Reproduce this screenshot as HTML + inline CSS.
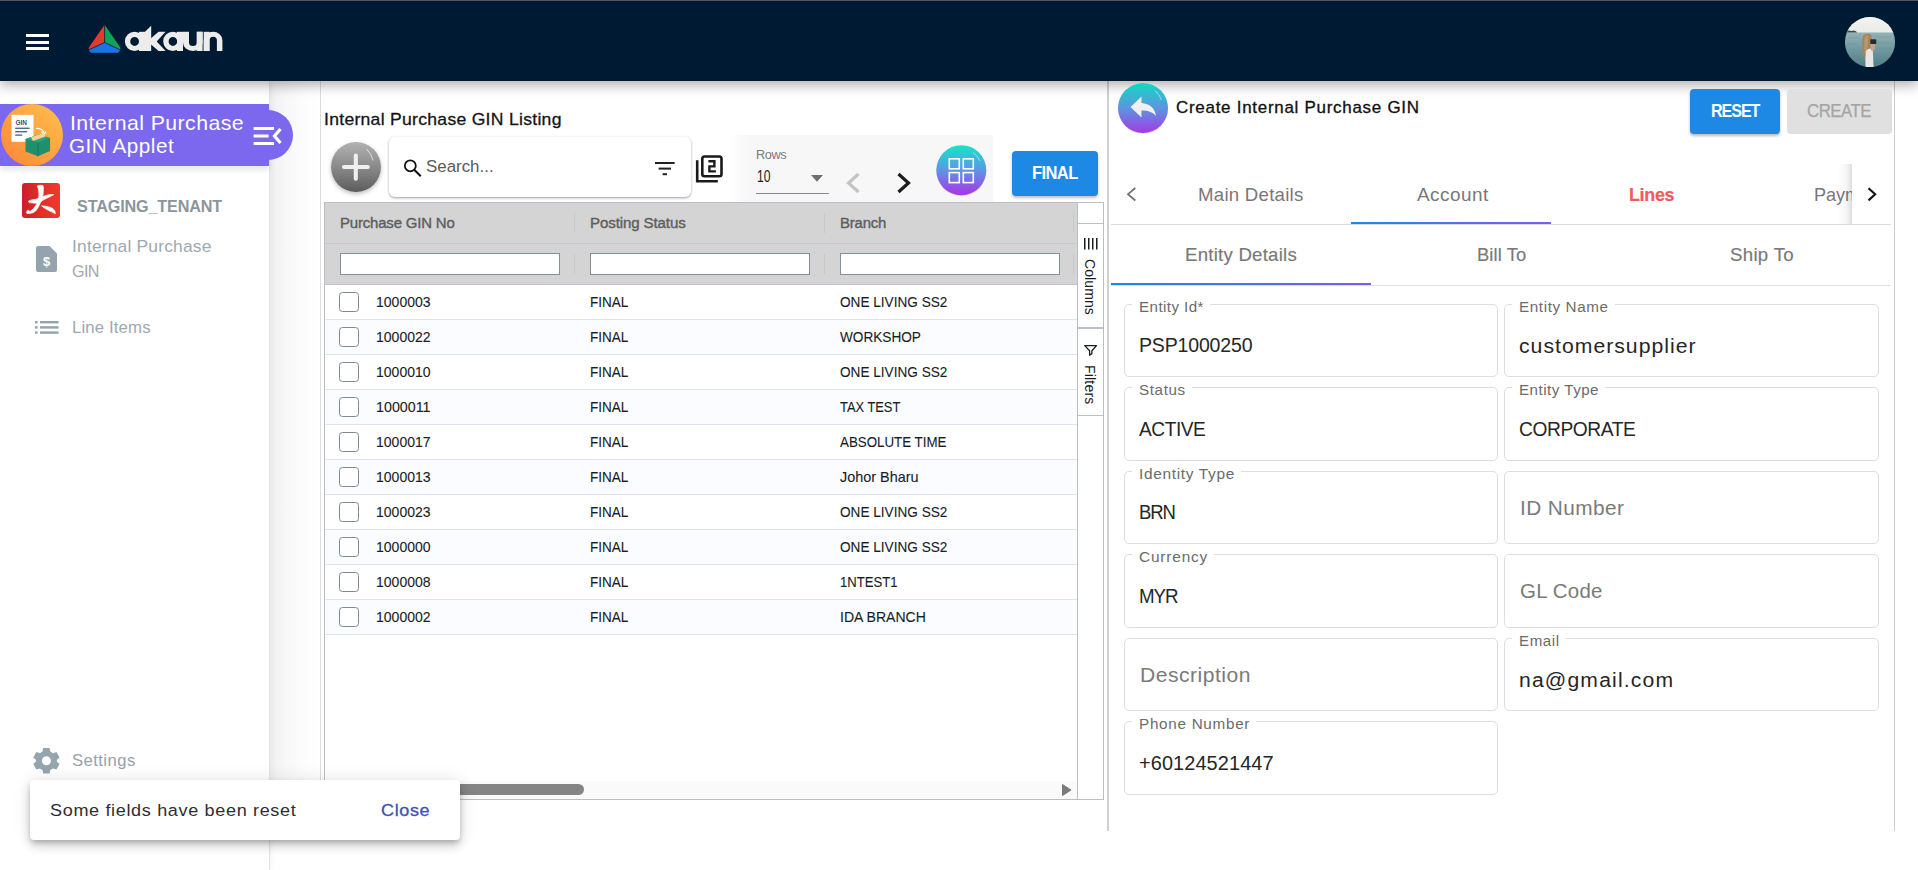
<!DOCTYPE html><html><head><meta charset="utf-8"><style>
*{box-sizing:border-box;margin:0;padding:0}
html,body{width:1918px;height:870px;overflow:hidden;background:#fff;font-family:"Liberation Sans",sans-serif}
.a{position:absolute}
.t{position:absolute;white-space:nowrap;line-height:1}
svg{position:absolute;overflow:visible}
</style></head><body>
<div class="a" style="left:270px;top:81px;width:1648px;height:789px;background:#fff"></div>
<div class="a" style="left:270px;top:81px;width:51px;height:720px;background:linear-gradient(90deg,#f1f1f1,#f8f8f8 35%,#fdfdfd 70%,#fff)"></div>
<div class="a" style="left:270px;top:801px;width:1648px;height:69px;background:#fff"></div>
<div class="a" style="left:1896px;top:81px;width:22px;height:789px;background:#fff"></div>
<div class="a" style="left:1107px;top:81px;width:789px;height:789px;background:#fff"></div>
<div class="a" style="left:0;top:81px;width:270px;height:789px;background:#fff;border-right:1px solid #e3e3e3;box-shadow:2px 0 6px rgba(0,0,0,.04)"></div>
<div class="a" style="left:320px;top:81px;width:787px;height:720px;background:#fff;border-left:1px solid #dcdcdc"></div>
<div class="a" style="left:1107px;top:81px;width:2px;height:750px;background:#d0d0d0"></div>
<div class="a" style="left:1894px;top:81px;width:1.2px;height:750px;background:#cdcdcd"></div>
<div class="a" style="left:0;top:0;width:1918px;height:81px;background:#011a33;border-top:1px solid #51565c;box-shadow:0 4px 12px rgba(0,0,0,.32);z-index:3"></div>
<div class="a" style="left:0;top:0;width:1918px;height:81px;z-index:4"><div class="a" style="left:25.7px;top:34px;width:23.5px;height:3px;background:#fff"></div><div class="a" style="left:25.7px;top:40.5px;width:23.5px;height:3px;background:#fff"></div><div class="a" style="left:25.7px;top:47px;width:23.5px;height:3px;background:#fff"></div><svg style="left:0;top:0" width="300" height="80" viewBox="0 0 300 80">
<path d="M104.6 24.8 L104.6 42.5 L89 49.6 Q88 48.8 89.2 47 Z" fill="#e03c2c"/>
<path d="M104.6 24.8 L120 47 Q121 48.8 120 49.6 L104.6 42.5 Z" fill="#0ea25a"/>
<path d="M104.6 42.5 L120 49.6 Q120 52.7 117 52.7 L92 52.7 Q89 52.7 89 49.6 Z" fill="#1a73e8"/>
<path d="M104.6 24 V42.5 L88.5 50 M104.6 42.5 L120.5 50" stroke="#0a1a2e" stroke-width="0.7" fill="none"/>
</svg><svg style="left:0;top:0" width="300" height="80" viewBox="0 0 300 80"><g fill="#ececec" fill-rule="evenodd">
<path d="M144.1 41.4 A9.6 9.6 0 1 1 124.9 41.4 A9.6 9.6 0 1 1 144.1 41.4 Z M139 41.4 A4.4 4.5 0 1 0 130.2 41.4 A4.4 4.5 0 1 0 139 41.4 Z"/>
<rect x="139" y="31.8" width="6.3" height="19.2"/>
<path d="M145 31.8 L151.2 25.7 L151.2 51 L145 51 Z"/>
<path d="M151 38.3 L158.6 31.8 L165.6 31.8 L156.7 41.4 L165.6 51 L158.6 51 L151 44.6 Z"/>
<path d="M182.4 41.4 A9.6 9.6 0 1 1 163.2 41.4 A9.6 9.6 0 1 1 182.4 41.4 Z M177.2 41.4 A4.3 4.5 0 1 0 168.6 41.4 A4.3 4.5 0 1 0 177.2 41.4 Z"/>
<rect x="177" y="31.8" width="6" height="19.2"/>
<path d="M183 31.8 V42.5 A9.8 8.5 0 0 0 202.6 42.5 V31.8 H196.8 V42.5 A3.9 3.6 0 0 1 189 42.5 V31.8 Z"/>
<rect x="196.8" y="31.8" width="5.8" height="19.2"/>
<path d="M203.7 51 V40.3 A9.35 8.5 0 0 1 222.4 40.3 V51 H216.9 V40.3 A3.7 3.6 0 0 0 209.5 40.3 V51 Z"/>
<rect x="203.7" y="31.8" width="5.8" height="19.2"/>
</g></svg><svg style="left:1845px;top:16.75px" width="50" height="50" viewBox="0 0 50 50">
<defs><clipPath id="av"><circle cx="25" cy="25.1" r="25.1"/></clipPath>
<linearGradient id="sea" x1="0" y1="0" x2="0" y2="1"><stop offset="0" stop-color="#b4cacc"/><stop offset="0.45" stop-color="#86a8ad"/><stop offset="1" stop-color="#4f7f88"/></linearGradient>
<linearGradient id="sky" x1="0" y1="0" x2="0" y2="1"><stop offset="0" stop-color="#f4f3ef"/><stop offset="1" stop-color="#e8ebe7"/></linearGradient></defs>
<g clip-path="url(#av)">
<rect width="50" height="50" fill="url(#sea)"/>
<rect width="50" height="15.5" fill="url(#sky)"/>
<path d="M0 15.6 L1.5 14 Q4 13.2 6.5 14 Q8.5 13 11 14.2 L12.2 15.6 Z" fill="#3d4d46"/>
<g stroke="#5f8d95" stroke-width="0.7" opacity="0.55"><path d="M3 21 H14 M30 20 H46 M2 27 H12 M32 26 H48 M4 33 H15 M31 32 H47 M6 39 H16 M30 38 H45 M9 45 H17 M30 44 H42"/></g>
<path d="M17.8 19 Q20 16.2 24.5 16.8 Q27 18 26.5 21.5 L25.8 29 Q24.8 33 24 38 L21 43 Q18 41 17.6 35 Q16.5 27 17.8 19 Z" fill="#a4845c"/>
<path d="M19.5 20 Q21 17.8 23.5 18.5 L22.5 30 Q21 35 20 38 Q18.8 30 19.5 20 Z" fill="#c2a073" opacity="0.7"/>
<path d="M21 34 Q22.5 31.2 25.5 31.5 L27.8 34 L28.6 50 L20.5 50 Q20 42 21 34 Z" fill="#e9e6e4"/>
<path d="M25.2 27.2 L30.2 27.2 L29.6 33 L26 33.6 Z" fill="#c7a286"/>
<rect x="25.3" y="22.3" width="6" height="4.8" rx="0.8" fill="#262d2e"/>
</g></svg></div>
<div class="a" style="left:0;top:0;width:300px;height:870px;z-index:2"><div class="a" style="left:0;top:104px;width:269px;height:62px;background:#7b68ee;box-shadow:0 4px 6px rgba(0,0,0,.10)"></div><div class="a" style="left:243px;top:110px;width:50px;height:50px;border-radius:25px;background:#7b68ee"></div><svg style="left:1px;top:104px" width="62" height="62" viewBox="0 0 62 62">
<defs><linearGradient id="og" x1="0.1" y1="0.9" x2="0.9" y2="0.1"><stop offset="0" stop-color="#fd8a3a"/><stop offset="1" stop-color="#ffbb4a"/></linearGradient></defs>
<circle cx="31" cy="31" r="31" fill="url(#og)"/>
<rect x="10.5" y="10.8" width="22" height="27" fill="#fff"/>
<text x="14.5" y="20.5" font-family="Liberation Sans" font-weight="bold" font-size="6.5" fill="#1e5a72">GIN</text>
<rect x="14.2" y="23.6" width="14.5" height="1.4" fill="#4a6f80"/>
<rect x="14.2" y="27" width="12" height="1.4" fill="#4a6f80"/>
<rect x="14.2" y="30.4" width="7" height="1.4" fill="#4a6f80"/>
<path d="M35 24.5 Q41 24 43 29" stroke="#fff" stroke-width="1.2" fill="none"/>
<path d="M40.5 28 L43 30.5 L45 27.5" stroke="#fff" stroke-width="1.2" fill="none"/>
<path d="M24.5 35 L38 30.5 L49 34 L49 47 L37 52.3 L24.5 47.5 Z" fill="#1f8f6e"/>
<path d="M24.5 35 L38 30.5 L49 34 L37 38.5 Z" fill="#2aa37d"/>
<path d="M37 38.5 L37 52.3" stroke="#177559" stroke-width="0.8"/>
<path d="M30 33.2 L42.5 29 L44.5 32.6 L32 37 Z" fill="#f4d49a"/>
</svg><div class="t" style="left:69.60px;top:113.08px;font-size:20.49px;letter-spacing:0.407px;transform-origin:0 0;transform:scaleX(1.0390);color:#fff;">Internal Purchase</div><div class="t" style="left:69.20px;top:136.70px;font-size:19.77px;letter-spacing:0.506px;transform-origin:0 0;transform:scaleX(1.0455);color:#fff;">GIN Applet</div><svg style="left:0;top:0" width="300" height="200">
<rect x="253.6" y="127" width="20.4" height="3" fill="#fff"/>
<rect x="253.6" y="134.5" width="15" height="3" fill="#fff"/>
<rect x="253.6" y="142" width="20.4" height="3" fill="#fff"/>
<path d="M280.5 129 L274.5 136 L280.5 143" stroke="#fff" stroke-width="3.2" fill="none"/>
</svg><svg style="left:22px;top:183px" width="38" height="35" viewBox="0 0 38 35">
<defs><linearGradient id="rg" x1="0" y1="0" x2="1" y2="0"><stop offset="0" stop-color="#c8202a"/><stop offset="0.4" stop-color="#e02a26"/><stop offset="1" stop-color="#ef3b2d"/></linearGradient></defs>
<rect width="38" height="35" rx="3" fill="url(#rg)"/>
<path d="M15.4 2.9 Q18 1.8 21 2.5 Q21.8 6 21.2 10 Q20.8 14 19.8 17 L17.8 21 Q16.2 25 13.7 28 Q11 30.8 5 30.5 Q3.9 29.6 4.8 28.4 Q5.6 26.6 6.5 27.4 Q7.3 28.4 8.7 28.1 Q12 26 14.4 21.5 L16.4 17 Q17.2 12 16.8 8.5 Q16.3 5 15.4 2.9 Z" fill="#fff" stroke="#fff" stroke-width="0.7"/>
<path d="M6.6 18 Q10 16.4 14 16.3 Q18 14.3 24 12.4 Q28 11.2 31.8 11.6 Q28.5 13.6 24 15.6 Q19.5 17.6 17.2 20 Q12 20.4 7.3 19.6 Q6.2 19 6.6 18 Z" fill="#fff" stroke="#fff" stroke-width="0.7"/>
<path d="M19.5 22.8 Q26 23 30.5 25.3 Q33.6 27.4 33.3 30.7 Q30 29 26 27.1 Q22 25.2 19.5 22.8 Z" fill="#fff" stroke="#fff" stroke-width="0.7"/>
</svg><div class="t" style="left:76.70px;top:198.04px;font-size:16.42px;letter-spacing:-0.155px;transform-origin:0 0;transform:scaleX(0.9864);color:#8a959d;font-weight:bold;">STAGING_TENANT</div><svg style="left:35.9px;top:246.2px" width="21" height="26" viewBox="0 0 21 26">
<path d="M2 0 H13.5 L21 7.5 V24 Q21 26 19 26 H2 Q0 26 0 24 V2 Q0 0 2 0 Z" fill="#94a3ad"/>
<text x="10.5" y="19.5" text-anchor="middle" font-family="Liberation Sans" font-weight="bold" font-size="13" fill="#fff">$</text>
</svg><div class="t" style="left:71.70px;top:238.35px;font-size:17.01px;letter-spacing:0.190px;transform-origin:0 0;transform:scaleX(1.0223);color:#9ea8b0;">Internal Purchase</div><div class="t" style="left:71.70px;top:263.15px;font-size:17.01px;letter-spacing:-0.715px;transform-origin:0 0;transform:scaleX(0.9502);color:#9ea8b0;">GIN</div><svg style="left:34.5px;top:320.7px" width="24" height="13" viewBox="0 0 24 13">
<g fill="#94a3ad"><rect x="0" y="0" width="2.6" height="2.4"/><rect x="0" y="5.2" width="2.6" height="2.4"/><rect x="0" y="10.4" width="2.6" height="2.4"/>
<rect x="5" y="0" width="18.5" height="2.4"/><rect x="5" y="5.2" width="18.5" height="2.4"/><rect x="5" y="10.4" width="18.5" height="2.4"/></g></svg><div class="t" style="left:71.70px;top:319.52px;font-size:16.57px;letter-spacing:0.121px;transform-origin:0 0;transform:scaleX(1.0141);color:#9ea8b0;">Line Items</div><svg style="left:0;top:0" width="80" height="800"><g transform="translate(46.4 760.8)">
<path fill="#94a5af" fill-rule="evenodd" d="M-3.2 -12.7 H3.2 L3.9 -9.2 L6.6 -7.6 L10 -8.8 L13.2 -3.3 L10.5 -1 V1 L13.2 3.3 L10 8.8 L6.6 7.6 L3.9 9.2 L3.2 12.7 H-3.2 L-3.9 9.2 L-6.6 7.6 L-10 8.8 L-13.2 3.3 L-10.5 1 V-1 L-13.2 -3.3 L-10 -8.8 L-6.6 -7.6 L-3.9 -9.2 Z M4.5 0 A4.5 4.5 0 1 0 -4.5 0 A4.5 4.5 0 1 0 4.5 0 Z"/></g></svg><div class="t" style="left:71.90px;top:752.78px;font-size:15.84px;letter-spacing:0.429px;transform-origin:0 0;transform:scaleX(1.0499);color:#96a2aa;">Settings</div></div>
<div class="a" style="left:0;top:0;width:1110px;height:870px;z-index:1"><div class="t" style="left:324.10px;top:111.15px;font-size:17.01px;letter-spacing:0.274px;transform-origin:0 0;transform:scaleX(1.0334);color:#141414;-webkit-text-stroke:0.3px #141414;">Internal Purchase GIN Listing</div><div class="a" style="left:331px;top:142px;width:49.6px;height:50px;border-radius:50%;background:linear-gradient(180deg,#b2b2b2,#8a8a8a 50%,#5c5c5c);box-shadow:0 2px 4px rgba(0,0,0,.25)"></div><svg style="left:331px;top:142px" width="50" height="50" viewBox="0 0 50 50">
<path d="M35.5 7 A21.5 21.5 0 0 1 42 18.5" stroke="rgba(255,255,255,.65)" stroke-width="1" fill="none"/>
<path d="M24.8 13.5 V36.8 M13 25 H36.8" stroke="#efefef" stroke-width="4.1" stroke-linecap="round"/>
</svg><div class="a" style="left:389px;top:137px;width:302px;height:60px;background:#fff;border-radius:6px;box-shadow:0 1px 3px rgba(0,0,0,.3),0 1px 1px rgba(0,0,0,.1)"></div><svg style="left:0;top:0" width="700" height="200"><circle cx="410.3" cy="165.8" r="5.5" stroke="#111" stroke-width="1.8" fill="none"/><path d="M414.2 169.8 L420.8 176.3" stroke="#111" stroke-width="2.1"/></svg><div class="t" style="left:426.40px;top:159.47px;font-size:16.86px;letter-spacing:0.008px;transform-origin:0 0;transform:scaleX(1.0009);color:#5a5a5a;">Search...</div><svg style="left:654.9px;top:161.7px" width="20" height="14" viewBox="0 0 20 14">
<rect x="0" y="0" width="19.6" height="2" fill="#222"/><rect x="3.6" y="5.6" width="12.4" height="2" fill="#222"/><rect x="7.6" y="11.2" width="4.4" height="2" fill="#222"/></svg><div class="a" style="left:730px;top:135px;width:263px;height:67px;background:linear-gradient(90deg,rgba(247,247,247,0),#f7f7f7 18px)"></div><svg style="left:0;top:0" width="760" height="200" viewBox="0 0 760 200">
<path d="M697.2 160.2 V181.3 H717.8" stroke="#1a1a1a" stroke-width="2.6" fill="none"/>
<rect x="702.3" y="156.5" width="19.2" height="19.7" rx="2.2" stroke="#1a1a1a" stroke-width="2.6" fill="none"/>
<path d="M708.4 161.3 H714.4 V166.4 H709.4 V171.4 H715.9" stroke="#1a1a1a" stroke-width="2.4" fill="none"/>
</svg><div class="t" style="left:756.30px;top:148.06px;font-size:13.23px;letter-spacing:-0.389px;transform-origin:0 0;transform:scaleX(0.9634);color:#7a7a7a;">Rows</div><div class="t" style="left:756.50px;top:167.84px;font-size:16.30px;transform-origin:0 0;transform:scaleX(0.7448);color:#222;">10</div><svg style="left:811px;top:174.5px" width="12" height="7"><path d="M0 0 H12 L6 6.8 Z" fill="#6f6f6f"/></svg><div class="a" style="left:756px;top:193px;width:73px;height:1px;background:#8a8a8a"></div><svg style="left:845px;top:172px" width="16" height="22"><path d="M13.5 2 L3.5 11 L13.5 20" stroke="#c4c4c4" stroke-width="3.2" fill="none"/></svg><svg style="left:896px;top:172px" width="16" height="22"><path d="M2.5 2 L12.5 11 L2.5 20" stroke="#1c1c1c" stroke-width="3.2" fill="none"/></svg><svg style="left:936px;top:144.6px" width="51" height="51" viewBox="0 0 51 51">
<defs><linearGradient id="gg" x1="0" y1="0" x2="0" y2="1"><stop offset="0" stop-color="#14e6c4"/><stop offset="0.5" stop-color="#5f95e6"/><stop offset="1" stop-color="#aa33e6"/></linearGradient></defs>
<circle cx="25.3" cy="26" r="25" fill="rgba(0,0,0,.12)"/>
<circle cx="25.3" cy="25.2" r="25" fill="url(#gg)"/>
<path d="M37 7.5 A21 21 0 0 1 44 16" stroke="rgba(255,255,255,.6)" stroke-width="0.8" fill="none"/>
<g stroke="#fff" stroke-width="1.6" fill="none">
<rect x="13.3" y="13.8" width="10" height="10"/><rect x="27.3" y="13.8" width="10" height="10"/>
<rect x="13.3" y="27.6" width="10" height="10"/><rect x="27.3" y="27.6" width="10" height="10"/></g>
</svg><div class="a" style="left:1012px;top:151px;width:86px;height:45px;background:#1e88e5;border-radius:4px;box-shadow:0 2px 3px rgba(0,0,0,.25)"></div><div class="t" style="left:1031.80px;top:164.97px;font-size:17.44px;letter-spacing:-0.638px;transform-origin:0 0;transform:scaleX(0.9475);color:#fff;font-weight:bold;">FINAL</div><div class="a" style="left:324px;top:202px;width:780px;height:598px;border:1px solid #babfc7;background:#fff"></div><div class="a" style="left:325px;top:203px;width:752px;height:82px;background:#d4d4d4;border-bottom:1px solid #c0c6cc"></div><div class="a" style="left:325px;top:243px;width:752px;height:1px;background:#c3c9cf"></div><div class="a" style="left:574px;top:213px;width:1px;height:20px;background:#c5c8cc"></div><div class="a" style="left:574px;top:254px;width:1px;height:20px;background:#c5c8cc"></div><div class="a" style="left:824px;top:213px;width:1px;height:20px;background:#c5c8cc"></div><div class="a" style="left:824px;top:254px;width:1px;height:20px;background:#c5c8cc"></div><div class="a" style="left:1073px;top:213px;width:1px;height:20px;background:#c5c8cc"></div><div class="a" style="left:1073px;top:254px;width:1px;height:20px;background:#c5c8cc"></div><div class="t" style="left:340.00px;top:215.13px;font-size:15.26px;letter-spacing:-0.169px;transform-origin:0 0;transform:scaleX(0.9798);color:#5e5e5e;-webkit-text-stroke:0.4px #5e5e5e;">Purchase GIN No</div><div class="t" style="left:590.00px;top:215.13px;font-size:15.26px;letter-spacing:-0.100px;transform-origin:0 0;transform:scaleX(0.9867);color:#5e5e5e;-webkit-text-stroke:0.4px #5e5e5e;">Posting Status</div><div class="t" style="left:840.00px;top:215.13px;font-size:15.26px;letter-spacing:-0.193px;transform-origin:0 0;transform:scaleX(0.9796);color:#5e5e5e;-webkit-text-stroke:0.4px #5e5e5e;">Branch</div><div class="a" style="left:340px;top:253px;width:220px;height:22px;background:#fff;border:1px solid #7f9396"></div><div class="a" style="left:590px;top:253px;width:220px;height:22px;background:#fff;border:1px solid #7f9396"></div><div class="a" style="left:840px;top:253px;width:220px;height:22px;background:#fff;border:1px solid #7f9396"></div><div class="a" style="left:325px;top:285px;width:752px;height:35px;background:#fff;border-bottom:1px solid #dde2eb"></div><div class="a" style="left:339.4px;top:292.2px;width:20px;height:19.5px;border:1.6px solid #7d8b90;border-radius:3.5px;background:#fff"></div><div class="t" style="left:375.60px;top:294.49px;font-size:15.07px;transform-origin:0 0;transform:scaleX(0.9306);color:#181d1f;-webkit-text-stroke:0.1px #181d1f;">1000003</div><div class="t" style="left:589.70px;top:294.45px;font-size:15.12px;transform-origin:0 0;transform:scaleX(0.8940);color:#181d1f;-webkit-text-stroke:0.1px #181d1f;">FINAL</div><div class="t" style="left:839.50px;top:294.45px;font-size:15.12px;transform-origin:0 0;transform:scaleX(0.9003);color:#181d1f;-webkit-text-stroke:0.1px #181d1f;">ONE LIVING SS2</div><div class="a" style="left:325px;top:320px;width:752px;height:35px;background:#fafcff;border-bottom:1px solid #dde2eb"></div><div class="a" style="left:339.4px;top:327.2px;width:20px;height:19.5px;border:1.6px solid #7d8b90;border-radius:3.5px;background:#fff"></div><div class="t" style="left:375.60px;top:329.49px;font-size:15.07px;transform-origin:0 0;transform:scaleX(0.9306);color:#181d1f;-webkit-text-stroke:0.1px #181d1f;">1000022</div><div class="t" style="left:589.70px;top:329.45px;font-size:15.12px;transform-origin:0 0;transform:scaleX(0.8940);color:#181d1f;-webkit-text-stroke:0.1px #181d1f;">FINAL</div><div class="t" style="left:839.50px;top:329.45px;font-size:15.12px;transform-origin:0 0;transform:scaleX(0.9013);color:#181d1f;-webkit-text-stroke:0.1px #181d1f;">WORKSHOP</div><div class="a" style="left:325px;top:355px;width:752px;height:35px;background:#fff;border-bottom:1px solid #dde2eb"></div><div class="a" style="left:339.4px;top:362.2px;width:20px;height:19.5px;border:1.6px solid #7d8b90;border-radius:3.5px;background:#fff"></div><div class="t" style="left:375.60px;top:364.49px;font-size:15.07px;transform-origin:0 0;transform:scaleX(0.9306);color:#181d1f;-webkit-text-stroke:0.1px #181d1f;">1000010</div><div class="t" style="left:589.70px;top:364.45px;font-size:15.12px;transform-origin:0 0;transform:scaleX(0.8940);color:#181d1f;-webkit-text-stroke:0.1px #181d1f;">FINAL</div><div class="t" style="left:839.50px;top:364.45px;font-size:15.12px;transform-origin:0 0;transform:scaleX(0.9003);color:#181d1f;-webkit-text-stroke:0.1px #181d1f;">ONE LIVING SS2</div><div class="a" style="left:325px;top:390px;width:752px;height:35px;background:#fafcff;border-bottom:1px solid #dde2eb"></div><div class="a" style="left:339.4px;top:397.2px;width:20px;height:19.5px;border:1.6px solid #7d8b90;border-radius:3.5px;background:#fff"></div><div class="t" style="left:375.60px;top:399.49px;font-size:15.07px;transform-origin:0 0;transform:scaleX(0.9487);color:#181d1f;-webkit-text-stroke:0.1px #181d1f;">1000011</div><div class="t" style="left:589.70px;top:399.45px;font-size:15.12px;transform-origin:0 0;transform:scaleX(0.8940);color:#181d1f;-webkit-text-stroke:0.1px #181d1f;">FINAL</div><div class="t" style="left:839.50px;top:399.45px;font-size:15.12px;transform-origin:0 0;transform:scaleX(0.8513);color:#181d1f;-webkit-text-stroke:0.1px #181d1f;">TAX TEST</div><div class="a" style="left:325px;top:425px;width:752px;height:35px;background:#fff;border-bottom:1px solid #dde2eb"></div><div class="a" style="left:339.4px;top:432.2px;width:20px;height:19.5px;border:1.6px solid #7d8b90;border-radius:3.5px;background:#fff"></div><div class="t" style="left:375.60px;top:434.49px;font-size:15.07px;transform-origin:0 0;transform:scaleX(0.9306);color:#181d1f;-webkit-text-stroke:0.1px #181d1f;">1000017</div><div class="t" style="left:589.70px;top:434.45px;font-size:15.12px;transform-origin:0 0;transform:scaleX(0.8940);color:#181d1f;-webkit-text-stroke:0.1px #181d1f;">FINAL</div><div class="t" style="left:839.50px;top:434.45px;font-size:15.12px;transform-origin:0 0;transform:scaleX(0.8825);color:#181d1f;-webkit-text-stroke:0.1px #181d1f;">ABSOLUTE TIME</div><div class="a" style="left:325px;top:460px;width:752px;height:35px;background:#fafcff;border-bottom:1px solid #dde2eb"></div><div class="a" style="left:339.4px;top:467.2px;width:20px;height:19.5px;border:1.6px solid #7d8b90;border-radius:3.5px;background:#fff"></div><div class="t" style="left:375.60px;top:469.49px;font-size:15.07px;transform-origin:0 0;transform:scaleX(0.9306);color:#181d1f;-webkit-text-stroke:0.1px #181d1f;">1000013</div><div class="t" style="left:589.70px;top:469.45px;font-size:15.12px;transform-origin:0 0;transform:scaleX(0.8940);color:#181d1f;-webkit-text-stroke:0.1px #181d1f;">FINAL</div><div class="t" style="left:839.50px;top:469.45px;font-size:15.12px;transform-origin:0 0;transform:scaleX(0.9532);color:#181d1f;-webkit-text-stroke:0.1px #181d1f;">Johor Bharu</div><div class="a" style="left:325px;top:495px;width:752px;height:35px;background:#fff;border-bottom:1px solid #dde2eb"></div><div class="a" style="left:339.4px;top:502.2px;width:20px;height:19.5px;border:1.6px solid #7d8b90;border-radius:3.5px;background:#fff"></div><div class="t" style="left:375.60px;top:504.49px;font-size:15.07px;transform-origin:0 0;transform:scaleX(0.9306);color:#181d1f;-webkit-text-stroke:0.1px #181d1f;">1000023</div><div class="t" style="left:589.70px;top:504.45px;font-size:15.12px;transform-origin:0 0;transform:scaleX(0.8940);color:#181d1f;-webkit-text-stroke:0.1px #181d1f;">FINAL</div><div class="t" style="left:839.50px;top:504.45px;font-size:15.12px;transform-origin:0 0;transform:scaleX(0.9003);color:#181d1f;-webkit-text-stroke:0.1px #181d1f;">ONE LIVING SS2</div><div class="a" style="left:325px;top:530px;width:752px;height:35px;background:#fafcff;border-bottom:1px solid #dde2eb"></div><div class="a" style="left:339.4px;top:537.2px;width:20px;height:19.5px;border:1.6px solid #7d8b90;border-radius:3.5px;background:#fff"></div><div class="t" style="left:375.60px;top:539.49px;font-size:15.07px;transform-origin:0 0;transform:scaleX(0.9306);color:#181d1f;-webkit-text-stroke:0.1px #181d1f;">1000000</div><div class="t" style="left:589.70px;top:539.45px;font-size:15.12px;transform-origin:0 0;transform:scaleX(0.8940);color:#181d1f;-webkit-text-stroke:0.1px #181d1f;">FINAL</div><div class="t" style="left:839.50px;top:539.45px;font-size:15.12px;transform-origin:0 0;transform:scaleX(0.9003);color:#181d1f;-webkit-text-stroke:0.1px #181d1f;">ONE LIVING SS2</div><div class="a" style="left:325px;top:565px;width:752px;height:35px;background:#fff;border-bottom:1px solid #dde2eb"></div><div class="a" style="left:339.4px;top:572.2px;width:20px;height:19.5px;border:1.6px solid #7d8b90;border-radius:3.5px;background:#fff"></div><div class="t" style="left:375.60px;top:574.49px;font-size:15.07px;transform-origin:0 0;transform:scaleX(0.9306);color:#181d1f;-webkit-text-stroke:0.1px #181d1f;">1000008</div><div class="t" style="left:589.70px;top:574.45px;font-size:15.12px;transform-origin:0 0;transform:scaleX(0.8940);color:#181d1f;-webkit-text-stroke:0.1px #181d1f;">FINAL</div><div class="t" style="left:839.50px;top:574.85px;font-size:14.65px;transform-origin:0 0;transform:scaleX(0.8942);color:#181d1f;-webkit-text-stroke:0.1px #181d1f;">1NTEST1</div><div class="a" style="left:325px;top:600px;width:752px;height:35px;background:#fafcff;border-bottom:1px solid #dde2eb"></div><div class="a" style="left:339.4px;top:607.2px;width:20px;height:19.5px;border:1.6px solid #7d8b90;border-radius:3.5px;background:#fff"></div><div class="t" style="left:375.60px;top:609.49px;font-size:15.07px;transform-origin:0 0;transform:scaleX(0.9306);color:#181d1f;-webkit-text-stroke:0.1px #181d1f;">1000002</div><div class="t" style="left:589.70px;top:609.45px;font-size:15.12px;transform-origin:0 0;transform:scaleX(0.8940);color:#181d1f;-webkit-text-stroke:0.1px #181d1f;">FINAL</div><div class="t" style="left:839.50px;top:609.45px;font-size:15.12px;transform-origin:0 0;transform:scaleX(0.9297);color:#181d1f;-webkit-text-stroke:0.1px #181d1f;">IDA BRANCH</div><div class="a" style="left:1077px;top:203px;width:1px;height:596px;background:#babfc7"></div><div class="a" style="left:1078px;top:223px;width:25px;height:1px;background:#babfc7"></div><div class="a" style="left:1078px;top:327px;width:25px;height:1.5px;background:#babfc7"></div><div class="a" style="left:1078px;top:415px;width:25px;height:1px;background:#babfc7"></div><svg style="left:1083.8px;top:238.2px" width="14" height="12"><g fill="#181d1f"><rect x="0" width="1.5" height="11.5"/><rect x="4" width="1.5" height="11.5"/><rect x="8" width="1.5" height="11.5"/><rect x="12" width="1.5" height="11.5"/></g></svg><div class="t" style="left:1084px;top:259px;font-size:14px;color:#181d1f;transform-origin:0 0;transform:translate(13px,0) rotate(90deg);letter-spacing:0.1px">Columns</div><svg style="left:0;top:0" width="1110" height="400"><path d="M1084.7 345.6 H1096.5 L1091.9 350.8 V353.6 L1089.6 355.2 V350.8 Z" stroke="#181d1f" stroke-width="1.3" fill="none" stroke-linejoin="round"/></svg><div class="t" style="left:1084px;top:365px;font-size:14px;color:#181d1f;transform-origin:0 0;transform:translate(13px,0) rotate(90deg);letter-spacing:0.2px">Filters</div><div class="a" style="left:325px;top:781px;width:752px;height:18px;background:#fafafa"></div><div class="a" style="left:445px;top:784px;width:139px;height:11px;background:#858585;border-radius:6px"></div><svg style="left:1062px;top:784px" width="10" height="12"><path d="M0.5 0.5 L9 6 L0.5 11.5 Z" fill="#7a7a7a" stroke="#7a7a7a" stroke-linejoin="round"/></svg></div>
<div class="a" style="left:0;top:0;width:1918px;height:870px;z-index:4"><svg style="left:1118px;top:83px" width="50" height="52" viewBox="0 0 50 52">
<defs><linearGradient id="bg2" x1="0" y1="0" x2="0" y2="1"><stop offset="0" stop-color="#12d9c0"/><stop offset="0.5" stop-color="#5b96e0"/><stop offset="1" stop-color="#a53ae6"/></linearGradient></defs>
<circle cx="25" cy="25.8" r="25" fill="rgba(0,0,0,.13)"/>
<circle cx="25" cy="25" r="25" fill="url(#bg2)"/>
<path d="M37 7.5 A21 21 0 0 1 43.5 17" stroke="rgba(255,255,255,.6)" stroke-width="0.9" fill="none"/>
<path d="M12.5 24 L23.5 13.5 V20 Q36 21 38 33 Q33 27 23.5 27.5 V34.5 Z" fill="#f0f0f0"/>
</svg><div class="t" style="left:1175.80px;top:99.76px;font-size:15.70px;letter-spacing:0.672px;transform-origin:0 0;transform:scaleX(1.0811);color:#111;-webkit-text-stroke:0.3px #111;">Create Internal Purchase GIN</div><div class="a" style="left:1690px;top:89px;width:90px;height:45px;background:#1e88e5;border-radius:4px;box-shadow:0 2px 3px rgba(0,0,0,.28)"></div><div class="t" style="left:1710.50px;top:103.17px;font-size:17.44px;letter-spacing:-1.095px;transform-origin:0 0;transform:scaleX(0.9179);color:#fff;font-weight:bold;">RESET</div><div class="a" style="left:1787px;top:89px;width:104.5px;height:45px;background:#e0e0e0;border-radius:4px"></div><div class="t" style="left:1806.50px;top:103.17px;font-size:17.44px;letter-spacing:-0.486px;transform-origin:0 0;transform:scaleX(0.9637);color:#a4a4a4;-webkit-text-stroke:0.25px #a4a4a4;">CREATE</div><div class="a" style="left:1111px;top:224px;width:780px;height:1px;background:#dcdcdc"></div><svg style="left:1126px;top:187px" width="11" height="15"><path d="M9.3 1 L2 7.2 L9.3 13.5" stroke="#6f6f6f" stroke-width="1.7" fill="none"/></svg><div class="t" style="left:1198.40px;top:185.56px;font-size:18.17px;letter-spacing:0.246px;transform-origin:0 0;transform:scaleX(1.0263);color:#787878;">Main Details</div><div class="t" style="left:1417.00px;top:185.56px;font-size:18.17px;letter-spacing:0.481px;transform-origin:0 0;transform:scaleX(1.0422);color:#787878;">Account</div><div class="t" style="left:1629.00px;top:185.56px;font-size:18.17px;letter-spacing:-0.242px;transform-origin:0 0;transform:scaleX(0.9792);color:#f25a5a;font-weight:bold;-webkit-text-stroke:0.2px #f25a5a;">Lines</div><div class="a" style="left:1351px;top:221.5px;width:200px;height:2.5px;background:linear-gradient(90deg,#1e88e5,#7b5cf0)"></div><div class="a" style="left:1700px;top:164px;width:152px;height:60px;overflow:hidden"><div class="t" style="left:114.00px;top:21.56px;font-size:18.17px;letter-spacing:-0.058px;transform-origin:0 0;transform:scaleX(0.9952);color:#787878;">Payment</div></div><div class="a" style="left:1838px;top:164px;width:14px;height:60px;background:linear-gradient(90deg,rgba(0,0,0,0),rgba(0,0,0,.04) 60%,rgba(0,0,0,.13))"></div><div class="a" style="left:1852px;top:164px;width:40px;height:60px;background:#fff"></div><svg style="left:1867px;top:187px" width="11" height="15"><path d="M1.5 1.2 L8.2 7.3 L1.5 13.4" stroke="#111" stroke-width="2.1" fill="none"/></svg><div class="a" style="left:1111px;top:285px;width:780px;height:1px;background:#e0e0e0"></div><div class="a" style="left:1111px;top:282.5px;width:260px;height:2.5px;background:linear-gradient(90deg,#1e88e5,#7b5cf0)"></div><div class="t" style="left:1185.30px;top:246.46px;font-size:18.17px;letter-spacing:0.222px;transform-origin:0 0;transform:scaleX(1.0265);color:#787878;-webkit-text-stroke:0.15px #787878;">Entity Details</div><div class="t" style="left:1476.80px;top:246.46px;font-size:18.17px;letter-spacing:0.090px;transform-origin:0 0;transform:scaleX(1.0111);color:#787878;-webkit-text-stroke:0.15px #787878;">Bill To</div><div class="t" style="left:1729.60px;top:246.46px;font-size:18.17px;letter-spacing:0.290px;transform-origin:0 0;transform:scaleX(1.0281);color:#787878;-webkit-text-stroke:0.15px #787878;">Ship To</div><div class="a" style="left:1124.2px;top:303.8px;width:374px;height:73.6px;border:1px solid #dedede;border-radius:5px"></div><div class="a" style="left:1132.2px;top:302.8px;width:78.0px;height:3px;background:#fff"></div><div class="t" style="left:1139.40px;top:299.79px;font-size:14.24px;letter-spacing:0.417px;transform-origin:0 0;transform:scaleX(1.0621);color:#6b6b6b;">Entity Id*</div><div class="t" style="left:1139.40px;top:336.30px;font-size:19.77px;letter-spacing:-0.166px;transform-origin:0 0;transform:scaleX(0.9870);color:#262626;">PSP1000250</div><div class="a" style="left:1504.2px;top:303.8px;width:375px;height:73.6px;border:1px solid #dedede;border-radius:5px"></div><div class="a" style="left:1512.2px;top:302.8px;width:102.39999999999986px;height:3px;background:#fff"></div><div class="t" style="left:1519.40px;top:299.79px;font-size:14.24px;letter-spacing:0.575px;transform-origin:0 0;transform:scaleX(1.0693);color:#6b6b6b;">Entity Name</div><div class="t" style="left:1519.40px;top:337.02px;font-size:19.51px;letter-spacing:0.933px;transform-origin:0 0;transform:scaleX(1.0867);color:#262626;">customersupplier</div><div class="a" style="left:1124.2px;top:387.0px;width:374px;height:73.6px;border:1px solid #dedede;border-radius:5px"></div><div class="a" style="left:1132.2px;top:386.0px;width:59.700000000000045px;height:3px;background:#fff"></div><div class="t" style="left:1139.40px;top:382.99px;font-size:14.24px;letter-spacing:0.580px;transform-origin:0 0;transform:scaleX(1.0673);color:#6b6b6b;">Status</div><div class="t" style="left:1139.40px;top:419.50px;font-size:19.77px;letter-spacing:-0.452px;transform-origin:0 0;transform:scaleX(0.9673);color:#262626;">ACTIVE</div><div class="a" style="left:1504.2px;top:387.0px;width:375px;height:73.6px;border:1px solid #dedede;border-radius:5px"></div><div class="a" style="left:1512.2px;top:386.0px;width:93.0px;height:3px;background:#fff"></div><div class="t" style="left:1519.40px;top:382.99px;font-size:14.24px;letter-spacing:0.468px;transform-origin:0 0;transform:scaleX(1.0628);color:#6b6b6b;">Entity Type</div><div class="t" style="left:1519.40px;top:419.50px;font-size:19.77px;letter-spacing:-0.428px;transform-origin:0 0;transform:scaleX(0.9715);color:#262626;">CORPORATE</div><div class="a" style="left:1124.2px;top:470.6px;width:374px;height:73.6px;border:1px solid #dedede;border-radius:5px"></div><div class="a" style="left:1132.2px;top:469.6px;width:108.39999999999986px;height:3px;background:#fff"></div><div class="t" style="left:1139.40px;top:466.59px;font-size:14.24px;letter-spacing:0.615px;transform-origin:0 0;transform:scaleX(1.0846);color:#6b6b6b;">Identity Type</div><div class="t" style="left:1139.40px;top:503.10px;font-size:19.77px;letter-spacing:-1.217px;transform-origin:0 0;transform:scaleX(0.9378);color:#262626;">BRN</div><div class="a" style="left:1504.2px;top:470.6px;width:375px;height:73.6px;border:1px solid #dedede;border-radius:5px"></div><div class="t" style="left:1520.20px;top:497.83px;font-size:20.20px;letter-spacing:0.394px;transform-origin:0 0;transform:scaleX(1.0313);color:#7a7a7a;">ID Number</div><div class="a" style="left:1124.2px;top:554.2px;width:374px;height:73.6px;border:1px solid #dedede;border-radius:5px"></div><div class="a" style="left:1132.2px;top:553.2px;width:81.59999999999991px;height:3px;background:#fff"></div><div class="t" style="left:1139.40px;top:550.19px;font-size:14.24px;letter-spacing:0.751px;transform-origin:0 0;transform:scaleX(1.0840);color:#6b6b6b;">Currency</div><div class="t" style="left:1139.40px;top:586.70px;font-size:19.77px;letter-spacing:-1.076px;transform-origin:0 0;transform:scaleX(0.9483);color:#262626;">MYR</div><div class="a" style="left:1504.2px;top:554.2px;width:375px;height:73.6px;border:1px solid #dedede;border-radius:5px"></div><div class="t" style="left:1520.20px;top:581.43px;font-size:20.20px;letter-spacing:0.201px;transform-origin:0 0;transform:scaleX(1.0148);color:#7a7a7a;">GL Code</div><div class="a" style="left:1124.2px;top:637.9px;width:374px;height:73.6px;border:1px solid #dedede;border-radius:5px"></div><div class="t" style="left:1140.20px;top:665.13px;font-size:20.20px;letter-spacing:0.477px;transform-origin:0 0;transform:scaleX(1.0452);color:#7a7a7a;">Description</div><div class="a" style="left:1504.2px;top:637.9px;width:375px;height:73.6px;border:1px solid #dedede;border-radius:5px"></div><div class="a" style="left:1512.2px;top:636.9px;width:53.700000000000045px;height:3px;background:#fff"></div><div class="t" style="left:1519.40px;top:633.89px;font-size:14.24px;letter-spacing:0.563px;transform-origin:0 0;transform:scaleX(1.0596);color:#6b6b6b;">Email</div><div class="t" style="left:1519.40px;top:671.12px;font-size:19.51px;letter-spacing:1.074px;transform-origin:0 0;transform:scaleX(1.0836);color:#262626;">na@gmail.com</div><div class="a" style="left:1124.2px;top:721.0px;width:374px;height:73.6px;border:1px solid #dedede;border-radius:5px"></div><div class="a" style="left:1132.2px;top:720.0px;width:123.70000000000005px;height:3px;background:#fff"></div><div class="t" style="left:1139.40px;top:716.99px;font-size:14.24px;letter-spacing:0.667px;transform-origin:0 0;transform:scaleX(1.0715);color:#6b6b6b;">Phone Number</div><div class="t" style="left:1139.40px;top:753.50px;font-size:19.77px;letter-spacing:0.097px;transform-origin:0 0;transform:scaleX(1.0080);color:#262626;">+60124521447</div></div>
<div class="a" style="left:0;top:0;width:1918px;height:870px;z-index:6"><div class="a" style="left:30px;top:780px;width:430px;height:60px;background:#fff;border-radius:4px;box-shadow:0 3px 5px -1px rgba(0,0,0,.2),0 6px 10px 0 rgba(0,0,0,.14),0 1px 18px 0 rgba(0,0,0,.12)"></div><div class="t" style="left:50.40px;top:802.77px;font-size:16.86px;letter-spacing:0.615px;transform-origin:0 0;transform:scaleX(1.0699);color:#2e2e2e;">Some fields have been reset</div><div class="t" style="left:380.80px;top:801.82px;font-size:17.15px;letter-spacing:0.595px;transform-origin:0 0;transform:scaleX(1.0516);color:#3f51b5;-webkit-text-stroke:0.3px #3f51b5;">Close</div></div>
</body></html>
